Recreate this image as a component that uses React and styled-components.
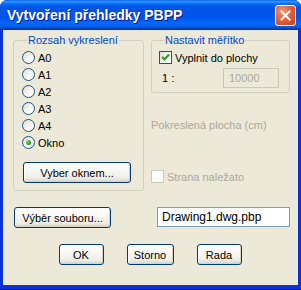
import React from "react";
import styled, { createGlobalStyle } from "styled-components";

const GlobalStyle = createGlobalStyle`
  html, body {
    margin: 0;
    padding: 0;
    background: #ffffff;
  }
  body {
    font-family: "Liberation Sans", Tahoma, sans-serif;
    font-size: 11px;
  }
`;

const Window = styled.div`
  width: 301px;
  height: 290px;
  display: flex;
  flex-direction: column;
  background: #0831d9;
  border-radius: 7px 7px 0 0;
  overflow: hidden;
  box-sizing: border-box;
  border-bottom: 1px solid #001ea0;
`;

const TitleBar = styled.div`
  height: 30px;
  flex: none;
  display: flex;
  align-items: center;
  justify-content: space-between;
  padding: 0 5px 0 7px;
  background: linear-gradient(
    to bottom,
    #0058ee 0%,
    #3593ff 4%,
    #288eff 7%,
    #127dff 10%,
    #036ffc 13%,
    #0262ee 17%,
    #0057e5 22%,
    #0054e3 27%,
    #0055eb 56%,
    #005bf5 66%,
    #026afe 76%,
    #0062ef 86%,
    #0052d6 92%,
    #0040ab 96%,
    #003092 100%
  );
`;

const Title = styled.span`
  font-family: "Liberation Sans", Arial, sans-serif;
  font-weight: bold;
  font-size: 14px;
  color: #ffffff;
  text-shadow: 1px 1px 0 #0a1883;
`;

const CloseButton = styled.div`
  width: 21px;
  height: 21px;
  box-sizing: border-box;
  border: 1px solid #ffffff;
  border-radius: 3px;
  background: radial-gradient(
    circle at 35% 30%,
    #f29a7c 0%,
    #e2603d 45%,
    #c5401f 100%
  );
  display: flex;
  align-items: center;
  justify-content: center;
`;

const Client = styled.div`
  flex: 1;
  margin: 0 3px 4px 3px;
  background: #ece9d8;
  padding: 4px 9px 0 10px;
  display: flex;
  flex-direction: column;
  color: #000000;
`;

const Columns = styled.div`
  display: grid;
  grid-template-columns: 131px 139px;
  column-gap: 7px;
`;

const Group = styled.fieldset`
  margin: 0;
  min-width: 0;
  border: 1px solid #d0d0bf;
  border-radius: 3px;
  padding: ${(p) => p.$pad};
  display: flex;
  flex-direction: column;
`;

const Legend = styled.legend`
  color: #0046d5;
  padding: 0 1px;
  margin-left: 5px;
  line-height: 13px;
`;

const OptionRow = styled.label`
  height: 17px;
  display: flex;
  align-items: center;
  gap: 3px;
  color: ${(p) => (p.$disabled ? "#aca899" : "#000000")};
`;

const Radio = styled.span`
  width: 13px;
  height: 13px;
  box-sizing: border-box;
  border-radius: 50%;
  border: 1px solid #1c5180;
  background: linear-gradient(135deg, #dcdcd4 0%, #ffffff 75%);
  display: flex;
  align-items: center;
  justify-content: center;
  &::after {
    content: "";
    display: ${(p) => (p.$checked ? "block" : "none")};
    width: 5px;
    height: 5px;
    border-radius: 50%;
    background: radial-gradient(circle at 35% 35%, #7be07b 0%, #21a121 60%, #1a7a1a 100%);
  }
`;

const Check = styled.span`
  width: 13px;
  height: 13px;
  box-sizing: border-box;
  border: 1px solid ${(p) => (p.$disabled ? "#cac8bb" : "#1c5180")};
  background: ${(p) =>
    p.$disabled ? "#ffffff" : "linear-gradient(135deg, #dcdcd4 0%, #ffffff 75%)"};
  display: flex;
  align-items: center;
  justify-content: center;
`;

const Button = styled.button`
  font-family: "Liberation Sans", Tahoma, sans-serif;
  font-size: 11px;
  color: #000000;
  width: ${(p) => p.$w}px;
  height: 21px;
  padding: 0;
  border: 1px solid #003c74;
  border-radius: 3px;
  background: linear-gradient(
    to bottom,
    #ffffff 0%,
    #f8f8f4 40%,
    #eeede5 80%,
    #d6d0c5 100%
  );
  box-shadow: inset -1px -1px 0 #d8d2bd, inset 1px 1px 0 #ffffff;
`;

const ScaleRow = styled.div`
  display: flex;
  align-items: center;
  justify-content: space-between;
  margin-top: 2px;
  padding-left: 3px;
`;

const TextBox = styled.div`
  box-sizing: border-box;
  width: ${(p) => p.$w}px;
  height: 20px;
  border: 1px solid ${(p) => (p.$disabled ? "#c9c7ba" : "#7f9db9")};
  background: ${(p) => (p.$disabled ? "#ece9d8" : "#ffffff")};
  color: ${(p) => (p.$disabled ? "#aca899" : "#000000")};
  padding: 0 ${(p) => (p.$disabled ? 5 : 4)}px;
  display: flex;
  align-items: center;
  font-size: ${(p) => (p.$disabled ? 11 : 12)}px;
`;

const RightColumn = styled.div`
  display: flex;
  flex-direction: column;
`;

const Caption = styled.div`
  color: #aca899;
  line-height: 13px;
  margin-top: 26px;
`;

const FileRow = styled.div`
  display: grid;
  grid-template-columns: 131px 139px;
  column-gap: 7px;
  margin-top: 16px;
  align-items: start;
`;

const ActionRow = styled.div`
  display: flex;
  justify-content: center;
  gap: 23px;
  margin-top: 16px;
  padding-right: 2px;
`;

const radios = ["A0", "A1", "A2", "A3", "A4", "Okno"];

export default function App() {
  return (
    <>
      <GlobalStyle />
      <Window>
        <TitleBar>
          <Title>Vytvoření přehledky PBPP</Title>
          <CloseButton>
            <svg width="11" height="11" viewBox="0 0 11 11">
              <path
                d="M1.5 1.5 L9.5 9.5 M9.5 1.5 L1.5 9.5"
                stroke="#ffffff"
                strokeWidth="2"
                strokeLinecap="square"
              />
            </svg>
          </CloseButton>
        </TitleBar>
        <Client>
          <Columns>
            <Group $pad="2px 0 7px 8px">
              <Legend>Rozsah vykreslení</Legend>
              {radios.map((r) => (
                <OptionRow key={r}>
                  <Radio $checked={r === "Okno"} />
                  {r}
                </OptionRow>
              ))}
              <Button $w={108} style={{ marginTop: 11, marginLeft: 1 }}>
                Vyber oknem...
              </Button>
            </Group>
            <RightColumn>
              <Group $pad="2px 10px 4px 7px">
                <Legend>Nastavit měřítko</Legend>
                <OptionRow>
                  <Check>
                    <svg width="9" height="9" viewBox="0 0 9 9">
                      <path
                        d="M1 4 L3.5 6.5 L8 1.5"
                        stroke="#21a121"
                        strokeWidth="2"
                        fill="none"
                      />
                    </svg>
                  </Check>
                  Vyplnit do plochy
                </OptionRow>
                <ScaleRow>
                  <span>1 :</span>
                  <TextBox $w={56} $disabled>
                    10000
                  </TextBox>
                </ScaleRow>
              </Group>
              <Caption>Pokreslená plocha (cm)</Caption>
              <OptionRow $disabled style={{ marginTop: 36 }}>
                <Check $disabled />
                Strana naležato
              </OptionRow>
            </RightColumn>
          </Columns>
          <FileRow>
            <Button $w={97} style={{ marginLeft: 1 }}>
              Výběr souboru...
            </Button>
            <TextBox $w={133} style={{ marginLeft: 6 }}>
              Drawing1.dwg.pbp
            </TextBox>
          </FileRow>
          <ActionRow>
            <Button $w={45}>OK</Button>
            <Button $w={47}>Storno</Button>
            <Button $w={45}>Rada</Button>
          </ActionRow>
        </Client>
      </Window>
    </>
  );
}
